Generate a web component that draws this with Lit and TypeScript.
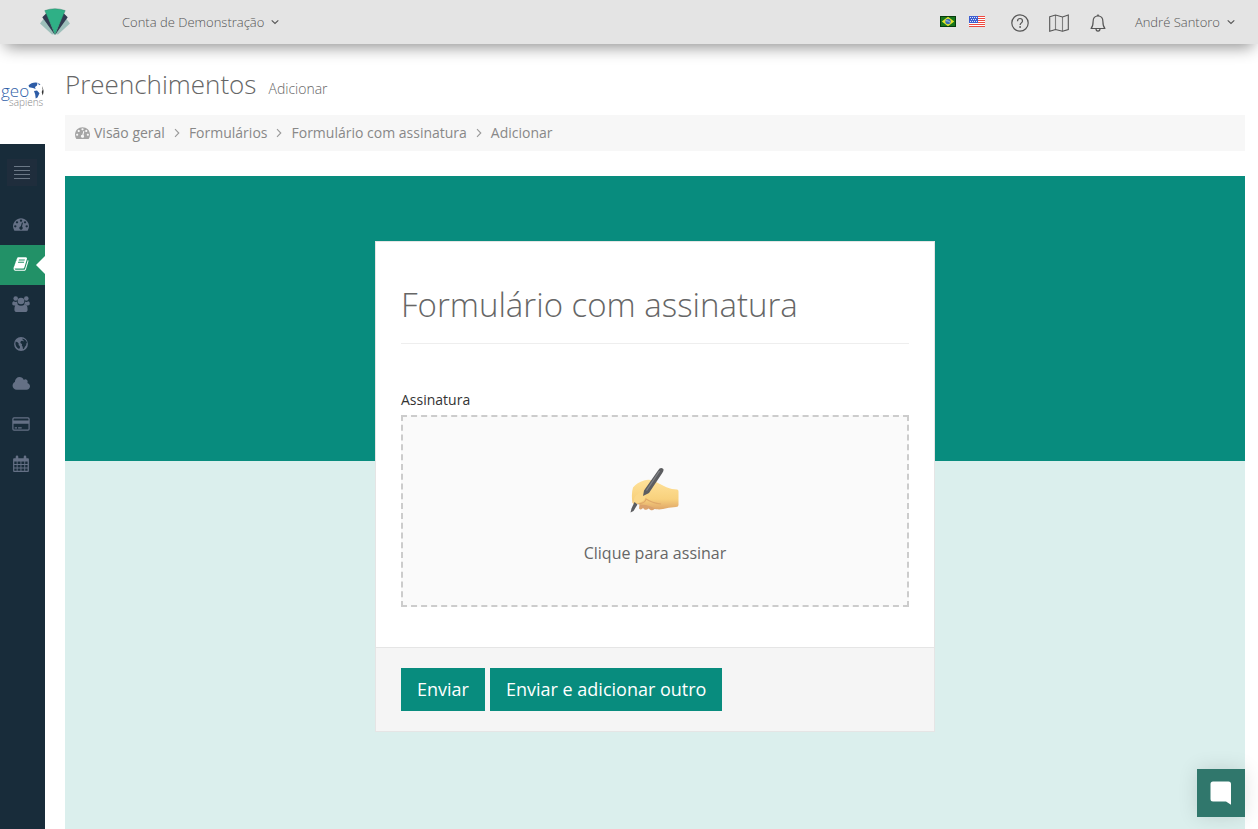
import { LitElement, html, css, svg } from "lit";
import { customElement, property } from "lit/decorators.js";

const gauge = svg`<path d="M384 1152q0-53-37.5-90.5t-90.5-37.5-90.5 37.5-37.5 90.5 37.5 90.5 90.5 37.5 90.5-37.5 37.5-90.5zm192-448q0-53-37.5-90.5t-90.5-37.5-90.5 37.5-37.5 90.5 37.5 90.5 90.5 37.5 90.5-37.5 37.5-90.5zm428 481l101-382q6-26-7.5-48.5t-38.5-29.5-48 6.5-30 39.5l-101 382q-60 5-107 43.5t-63 98.5q-20 77 20 146t117 89 146-20 89-117q16-60-6-117t-72-91zm660-33q0-53-37.5-90.5t-90.5-37.5-90.5 37.5-37.5 90.5 37.5 90.5 90.5 37.5 90.5-37.5 37.5-90.5zm-640-640q0-53-37.5-90.5t-90.5-37.5-90.5 37.5-37.5 90.5 37.5 90.5 90.5 37.5 90.5-37.5 37.5-90.5zm448 192q0-53-37.5-90.5t-90.5-37.5-90.5 37.5-37.5 90.5 37.5 90.5 90.5 37.5 90.5-37.5 37.5-90.5zm320 448q0 261-141 483-19 29-54 29h-1402q-35 0-54-29-141-221-141-483 0-182 71-348t191-286 286-191 348-71 348 71 286 191 191 286 71 348z"/>`;

const icons: Record<string, { box: string; art: unknown }> = {
  gauge: { box: "0 0 1792 1792", art: gauge },
  book: {
    box: "0 0 1792 1792",
    art: svg`<path d="M1703 478q40 57 18 129l-275 906q-19 64-76.500 107.500t-122.500 43.500h-923q-77 0-148.500-53.500t-99.500-131.500q-24-67-2-127 0-4 3-27t4-37q1-8-3-21.500t-3-19.500q2-11 8-21t16.500-23.500 16.500-23.500q23-38 45-91.500t30-91.500q3-10 .5-30t-.5-28q3-11 17-28t17-23q21-36 42-92t25-90q1-9-2.500-32t.5-28q4-13 22-30.500t22-22.500q19-26 42.500-84.500t27.500-96.500q1-8-3-25.500t-2-26.500q2-8 9-18t18-23 17-21q8-12 16.500-30.500t15-35 16-36 19.500-32 26.500-23.500 36-11.500 47.500 5.500l-1 3q38-9 51-9h761q74 0 114 56t18 130l-274 906q-36 119-71.500 153.500t-128.500 34.500h-869q-27 0-38 15-11 16-1 43 24 70 144 70h923q29 0 56-15.500t35-41.500l300-987q7-22 5-57 38 15 59 43zm-1064 2q-4 13 2 22.500t20 9.500h608q13 0 25.500-9.500t16.500-22.500l21-64q4-13-2-22.500t-20-9.500h-608q-13 0-25.500 9.500t-16.500 22.500zm-83 256q-4 13 2 22.500t20 9.500h608q13 0 25.500-9.500t16.500-22.500l21-64q4-13-2-22.500t-20-9.500h-608q-13 0-25.500 9.500t-16.500 22.500z"/>`,
  },
  users: {
    box: "0 0 18 18",
    art: svg`<circle cx="3.700" cy="3.500" r="2.300"/><circle cx="14.300" cy="3.500" r="2.300"/><circle cx="9" cy="6" r="3.300"/>
      <path d="M1.600 6.200q2.100 1.300 3.500.4-.1 1.700.9 2.900-1.500.1-2.500 1.100H2Q.2 10.500.2 9.100q0-2.700 1.400-2.900zM16.400 6.200q-2.100 1.300-3.500.4.100 1.700-.9 2.900 1.500.1 2.500 1.100H16q1.800-.1 1.800-1.500 0-2.700-1.400-2.900zM5.300 9.400q3.700 2.600 7.400 0 2.900.1 2.900 5 0 2.600-2.600 2.600H5q-2.600 0-2.600-2.600 0-4.900 2.900-5z"/>`,
  },
  globe: {
    box: "0 0 18 18",
    art: svg`<path fill-rule="evenodd" d="M9 2.100a6.900 6.900 0 1 0 0 13.800A6.900 6.900 0 0 0 9 2.100zM10.500 3.500l2.300 1 1.500 1.500.8 1.900-.9.500.1 1.600-1.500 1.900-1 2-.9-.2-.2-1.900-.9-1.400.3-1.300-1.200-.6-.6-1.300.8-1.200 1.300-.2.900.6.600-.6-1.300-1zM3.700 6.600l1.900.7 1.200 1.500-.3 1.200 1.200 1 .3 1.400-.9 1.700-1.600-1-1.400-1.800-.7-2.200z"/>`,
  },
  cloud: {
    box: "0 0 1984 1792",
    art: svg`<path d="M1984 1152q0 159-112.500 271.500t-271.500 112.500h-1088q-185 0-316.500-131.500t-131.500-316.500q0-132 71-241.500t187-163.500q-2-28-2-43 0-212 150-362t362-150q158 0 286.500 88t187.500 230q70-62 166-62 106 0 181 75t75 181q0 75-41 138 129 30 213 134.500t84 239.500z"/>`,
  },
  card: {
    box: "0 0 18 18",
    art: svg`<path fill-rule="evenodd" d="M2 2.200h14q1.700 0 1.700 1.700v10.200q0 1.700-1.700 1.700H2q-1.700 0-1.700-1.700V3.900Q.3 2.200 2 2.200zM1.500 4v1.500h15V4q0-.6-.6-.6H2.100q-.6 0-.6.6zm0 4.700V14q0 .6.600.6h13.800q.6 0 .6-.6V8.700zM2.700 12.200H5v1.200H2.700zm3.400 0h3.600v1.200H6.100z"/>`,
  },
  calendar: {
    box: "0 0 18 18",
    art: svg`<path d="M2 3.300h14q.9 0 .9.900v11.900q0 .9-.9.900H2q-.9 0-.9-.9V4.200q0-.9.900-.9zM2.300 6.500v2.600h2.400V6.500zm3.300 0v2.600h2.900V6.500zm3.800 0v2.600h2.900V6.500zm3.800 0v2.600h2.400V6.500zM2.300 10v2.600h2.400V10zm3.300 0v2.600h2.900V10zm3.800 0v2.600h2.900V10zm3.800 0v2.600h2.400V10zM2.300 13.500v2.300h2.400v-2.300zm3.300 0v2.300h2.900v-2.300zm3.800 0v2.300h2.900v-2.300zm3.800 0v2.300h2.400v-2.300z" fill-rule="evenodd"/><rect x="3.700" y=".6" width="2.600" height="4.600" rx="1.300"/><rect x="11.700" y=".6" width="2.600" height="4.600" rx="1.300"/>`,
  },
  chevronDown: {
    box: "0 0 8 8",
    art: svg`<path d="M.7 2.300 4 5.500l3.300-3.200" fill="none" stroke="currentColor" stroke-width="1.100"/>`,
  },
  chevronRight: {
    box: "0 0 8 10",
    art: svg`<path d="M2 1.200 5.800 5 2 8.800" fill="none" stroke="currentColor" stroke-width="1.100"/>`,
  },
  lines: {
    box: "0 0 16 14",
    art: svg`<path d="M0 .5h16M0 4.500h16M0 8.500h16M0 12.500h16" fill="none" stroke="currentColor"/>`,
  },
  help: {
    box: "0 0 20 20",
    art: svg`<g fill="none" stroke="currentColor" stroke-width="1.200"><circle cx="10" cy="10" r="8.200"/><path d="M7.500 8.200c0-1.700 1.100-2.700 2.500-2.700s2.500 1 2.500 2.400c0 1.900-2.400 2-2.400 4.100"/></g><circle cx="10.100" cy="14" r=".9"/>`,
  },
  map: {
    box: "0 0 20 20",
    art: svg`<g fill="none" stroke="currentColor" stroke-width="1.100"><path d="M.7 3.700 6.500 2l7 2 5.800-2v14.500l-5.800 1.700-7-1.700-5.800 1.700z"/><path d="M6.500 2v14.500M13.500 4v14.200" opacity=".7"/></g>`,
  },
  bell: {
    box: "0 0 20 20",
    art: svg`<g fill="none" stroke="currentColor" stroke-width="1.200"><path d="M3.100 15.500c1.900-2 2-3.700 2-7C5.100 5.300 6.600 3 10 3s4.900 2.300 4.900 5.500c0 3.300.1 5 2 7z" stroke-linejoin="round"/><path d="M8 15.700a2 2.400 0 0 0 4 0M9 2.800a1.100 1.100 0 0 1 2 0"/></g>`,
  },
};

@customElement("app-icon")
export class AppIcon extends LitElement {
  @property() name = "gauge";

  static styles = css`
    :host {
      display: inline-flex;
      flex: none;
    }
    svg {
      width: 100%;
      height: 100%;
      fill: currentColor;
    }
  `;

  render() {
    const icon = icons[this.name];
    return html`<svg viewBox=${icon.box} aria-hidden="true">${icon.art}</svg>`;
  }
}

@customElement("app-header")
export class AppHeader extends LitElement {
  static styles = css`
    :host {
      display: flex;
      align-items: center;
      justify-content: space-between;
      height: 44px;
      padding: 0 23px 0 39px;
      background: #e4e4e4;
      color: #555;
      box-shadow: 0 8px 16px -5px rgba(0, 0, 0, 0.45);
      position: relative;
      z-index: 1;
    }
    .side {
      display: flex;
      align-items: center;
    }
    .brand {
      display: flex;
      margin-right: 51px;
      padding-bottom: 2px;
    }
    .brand svg {
      width: 32px;
      height: 28px;
    }
    button {
      display: flex;
      align-items: center;
      gap: 7px;
      padding: 0;
      border: 0;
      background: none;
      color: inherit;
      font: 300 13px/20px "Open Sans", sans-serif;
    }
    .flags {
      display: flex;
      gap: 13px;
      margin-right: 25px;
      padding-bottom: 1px;
    }
    .flags svg {
      width: 16px;
      height: 11px;
    }
    .tools {
      display: flex;
      gap: 19px;
      margin-right: 27px;
      padding-top: 2px;
    }
    .tool {
      width: 20px;
      height: 20px;
    }
    .caret {
      width: 8px;
      height: 8px;
    }
  `;

  render() {
    return html`
      <div class="side">
        <a class="brand" href="#" aria-label="Início">
          <svg viewBox="0 0 32 28">
            <path d="M1 16.500 6 10l10 17-3 .5z M31 16.500 26 10 16 27l3 .5z" fill="#9dbfba" />
            <path d="M3.300 10.300 7.600 6 16 28z M28.700 10.300 24.400 6 16 28z" fill="#323a50" />
            <path d="M5.800 3.600Q16-.2 26.200 3.600L16 27.500z" fill="#2fb086" stroke="#26775f" stroke-width=".4" />
          </svg>
        </a>
        <button>Conta de Demonstração <app-icon class="caret" name="chevronDown"></app-icon></button>
      </div>
      <div class="side">
        <div class="flags">
          <button aria-label="Português">
            <svg viewBox="0 0 16 11">
              <rect width="16" height="11" fill="#063b0c" /><rect x="1" y="1" width="14" height="9" fill="#17761c" />
              <path d="M8 .8 14.200 5.500 8 10.200 1.800 5.500z" fill="#e3e42c" /><circle cx="8" cy="5.500" r="2.700" fill="#3a6cb4" />
              <path d="M5.600 4.700q2.800-.3 4.700 1.700" stroke="#c8dce8" fill="none" stroke-width=".8" />
            </svg>
          </button>
          <button aria-label="English">
            <svg viewBox="0 0 16 11">
              <rect width="16" height="11" fill="#fff" />
              <path d="M0 .5h16M0 2.500h16M0 4.500h16M0 6.500h16M0 8.500h16M0 10.500h16" stroke="#ec4a40" />
              <rect width="9" height="7" fill="#3f60d0" />
              <path d="M1 1.500h7M2 3.500h6M1 5.500h7" stroke="#dfe6fa" stroke-dasharray="1 1" />
            </svg>
          </button>
        </div>
        <div class="tools">
          <button aria-label="Ajuda"><app-icon class="tool" name="help"></app-icon></button>
          <button aria-label="Mapa"><app-icon class="tool" name="map"></app-icon></button>
          <button aria-label="Notificações"><app-icon class="tool" name="bell"></app-icon></button>
        </div>
        <button>André Santoro <app-icon class="caret" name="chevronDown"></app-icon></button>
      </div>
    `;
  }
}

@customElement("app-sidebar")
export class AppSidebar extends LitElement {
  static styles = css`
    :host {
      display: flex;
      flex-direction: column;
      width: 45px;
      flex: none;
    }
    .client {
      display: flex;
      padding: 34px 0 33px;
    }
    .client svg {
      width: 45px;
      height: 33px;
    }
    .geo {
      font: 300 17px "Open Sans", sans-serif;
      fill: #2f5fa8;
    }
    .sapiens {
      font: 300 10px "Open Sans", sans-serif;
      fill: #888;
    }
    nav {
      flex: 1;
      display: flex;
      flex-direction: column;
      padding-top: 15px;
      background: #182c3a;
      color: #647085;
    }
    button {
      display: flex;
      align-items: center;
      justify-content: center;
      width: 30px;
      height: 27px;
      margin: 0 0 19px 7px;
      padding: 0;
      border: 0;
      background: #1f2d3c;
      color: #6b7886;
    }
    .lines {
      width: 16px;
      height: 14px;
    }
    a {
      display: flex;
      align-items: center;
      box-sizing: border-box;
      height: 40px;
      padding: 0 0 2px 12px;
      color: inherit;
      position: relative;
    }
    .icon {
      width: 18px;
      height: 18px;
    }
    .small {
      width: 16px;
      height: 16px;
      margin: 0 1px;
    }
    .active {
      background: #229167;
      color: #fff;
    }
    .active::after {
      content: "";
      position: absolute;
      right: 0;
      top: 11px;
      border: 9px solid transparent;
      border-left: 0;
      border-right-color: #fff;
    }
  `;

  private items = [
    ["gauge", "Visão geral"],
    ["book", "Formulários"],
    ["users", "Usuários"],
    ["globe", "Mapa"],
    ["cloud", "Nuvem"],
    ["card", "Pagamentos"],
    ["calendar", "Agenda"],
  ];

  render() {
    return html`
      <div class="client">
        <svg viewBox="0 0 45 33">
          <text class="geo" x="1" y="19">geo</text>
          <text class="sapiens" x="9" y="28">sapiens</text>
          <path d="M28.500 7.500q3-3.500 9-2.800l-.5 2.800-2 1.400.6 2.200-2.600-1.200-3.800-.6z M34 13l3-.4 2.500 2.600-2 4.300-1.800 1-.5-4z M38 5l2.500 1.300-1.500 1z" fill="#2d5ca6" />
          <path d="M42 8q2.600 4.500.7 9.500l-1-3.500 1-2.500z" fill="#333" />
        </svg>
      </div>
      <nav>
        <button aria-label="Alternar menu"><app-icon class="lines" name="lines"></app-icon></button>
        ${this.items.map(
          ([icon, label]) => html`<a href="#" aria-label=${label} class=${icon === "book" ? "active" : ""}
            ><app-icon class=${icon === "gauge" || icon === "book" ? "small" : "icon"} name=${icon}></app-icon
          ></a>`
        )}
      </nav>
    `;
  }
}

@customElement("signature-form")
export class SignatureForm extends LitElement {
  static styles = css`
    :host {
      display: block;
      box-sizing: border-box;
      width: 100%;
      max-width: 560px;
      border: 1px solid #e5e5e5;
      background: #fff;
    }
    .body {
      padding: 38px 25px 40px;
    }
    h2 {
      margin: 0 0 46px;
      padding-bottom: 13px;
      border-bottom: 1px solid #eee;
      color: #666;
      font-size: 33px;
      line-height: 50px;
      font-weight: 300;
    }
    label {
      display: block;
      margin-bottom: 5px;
      font-size: 14px;
      line-height: 20px;
      color: #333;
    }
    button {
      font-family: inherit;
      border: 0;
    }
    .pad {
      display: flex;
      flex-direction: column;
      align-items: center;
      gap: 27px;
      width: 100%;
      padding: 50px 20px 40px;
      border: 2px dashed #ccc;
      background: #fafafa;
      color: #666;
      font-size: 16px;
      line-height: 24px;
    }
    .pad svg {
      width: 50px;
      height: 47px;
    }
    .actions {
      display: flex;
      gap: 5px;
      padding: 20px 25px;
      border-top: 1px solid #e5e5e5;
      background: #f5f5f5;
    }
    .send {
      padding: 9px 16px;
      background: #088c7e;
      color: #fff;
      font-size: 18px;
      line-height: 25px;
    }
  `;

  render() {
    return html`
      <form @submit=${(e: Event) => e.preventDefault()}>
        <div class="body">
          <h2>Formulário com assinatura</h2>
          <label for="signature">Assinatura</label>
          <button class="pad" id="signature" type="button">
            <svg viewBox="0 0 50 47" aria-hidden="true">
              <defs>
                <linearGradient id="skin" x1="0" y1="0" x2="0" y2="1">
                  <stop offset="0" stop-color="#ffe29a" />
                  <stop offset=".65" stop-color="#f8d17d" />
                  <stop offset="1" stop-color="#dfa668" />
                </linearGradient>
              </defs>
              <path d="M10 33l-1 8.500q2 2 4-.5l1.500 1.500q2 1 4-1l2 1.500q2 1 4-1l2 .2q3-1 3-3l-4-6z" fill="#dba26c" />
              <path d="M2.500 36Q1 27 3 20.500 7 15.500 14 13.500q5-1.500 10 .500l6 3q7 4 12 5l5 .5q1.500 0 1.500 2V38q0 2-2.500 2-8 .5-13 2-7 1.500-11-2l-6-2-6-.5z" fill="url(#skin)" />
              <path d="M3 37Q3.500 29 8.500 26.500q3-1.500 5-5.500l5-3q3 1.500 0 5.500-3 3-3 6-1 5-7 6.500z" fill="#fbd88a" />
              <path d="M8.500 37q7-1 7.500-5 6 4 15 5" fill="none" stroke="#dfa868" stroke-width="1.200" />
              <path d="M28 3.500Q30.500-.5 33.300 2q.8 1.500-1 4L19 26l-6 3 1-5.500z" fill="#5c5d60" />
              <path d="M29.500 4 16.500 23.500" stroke="#808286" stroke-width="1.300" />
              <path d="M4.500 35 7.500 37.500 3.500 44l-3 1.500 1-4z" fill="#5c5d60" />
            </svg>
            Clique para assinar
          </button>
        </div>
        <div class="actions">
          <button class="send" type="submit">Enviar</button>
          <button class="send" type="submit">Enviar e adicionar outro</button>
        </div>
      </form>
    `;
  }
}

@customElement("app-root")
export class AppRoot extends LitElement {
  static styles = css`
    :host {
      display: flex;
      flex-direction: column;
      min-height: 100vh;
      background: #fff;
      font-family: "Open Sans", sans-serif;
    }
    .layout {
      flex: 1;
      display: flex;
    }
    main {
      flex: 1;
      min-width: 0;
      display: flex;
      flex-direction: column;
      padding: 20px 13px 0 20px;
    }
    .heading {
      display: flex;
      align-items: baseline;
      gap: 12px;
      margin-bottom: 11px;
      color: #666;
      font-weight: 300;
    }
    h1 {
      margin: 0;
      font-size: 26px;
      line-height: 40px;
      font-weight: 300;
    }
    .sub {
      font-size: 14px;
    }
    .crumbs {
      display: flex;
      align-items: center;
      margin-bottom: 25px;
      padding: 8px 10px;
      background: #f7f7f7;
      color: #888;
      font-size: 14px;
      line-height: 20px;
    }
    .crumbs a {
      color: inherit;
      text-decoration: none;
    }
    .home {
      width: 15px;
      height: 15px;
      margin: 0 4px 1px 0;
      color: #a5a5a5;
    }
    .sep {
      width: 8px;
      height: 10px;
      margin: 0 8px;
      color: #999;
    }
    .stage {
      flex: 1;
      display: flex;
      justify-content: center;
      align-items: flex-start;
      padding: 65px 0 80px;
      background: linear-gradient(#088c7e 285px, #dbefed 285px);
    }
    .chat {
      position: fixed;
      right: 13px;
      bottom: 12px;
      width: 48px;
      height: 48px;
      padding: 0;
      border: 0;
      background: #30776c;
      box-shadow: 0 0 20px rgba(0, 0, 0, 0.12);
    }
    .chat svg {
      display: block;
      width: 48px;
      height: 48px;
    }
  `;

  private trail = ["Visão geral", "Formulários", "Formulário com assinatura", "Adicionar"];

  render() {
    return html`
      <app-header></app-header>
      <div class="layout">
        <app-sidebar></app-sidebar>
        <main>
          <div class="heading">
            <h1>Preenchimentos</h1>
            <span class="sub">Adicionar</span>
          </div>
          <nav class="crumbs">
            <app-icon class="home" name="gauge"></app-icon>
            ${this.trail.map(
              (step, i) => html`${i ? html`<app-icon class="sep" name="chevronRight"></app-icon>` : ""}<a href="#">${step}</a>`
            )}
          </nav>
          <section class="stage"><signature-form></signature-form></section>
        </main>
      </div>
      <button class="chat" aria-label="Abrir conversa">
        <svg viewBox="0 0 48 48">
          <path d="M16 12.500h15.500q2.500 0 2.500 2.500v20.800l-5-3.300H16q-2.500 0-2.500-2.500V15q0-2.500 2.500-2.500z" fill="#fff" />
        </svg>
      </button>
    `;
  }
}
